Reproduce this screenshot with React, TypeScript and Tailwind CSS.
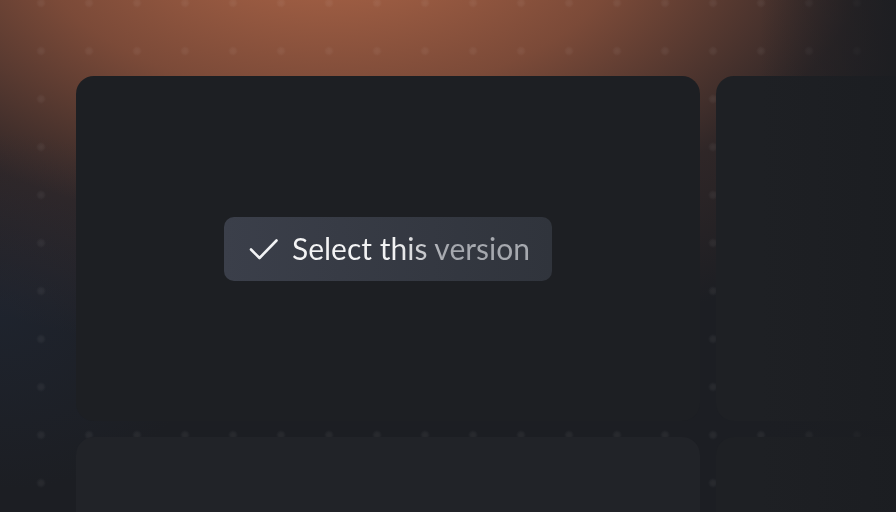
import React from 'react';

const CheckMark: React.FC = () => (
  <svg width="30" height="24" viewBox="0 0 30 24" fill="none" className="shrink-0">
    <path d="M2 12.5 10.5 21 27.5 3.5" stroke="#f2f3f5" strokeWidth="2.6" strokeLinecap="round" strokeLinejoin="round" />
  </svg>
);

const App: React.FC = () => {
  return (
    <div className="relative w-[896px] h-[512px] overflow-hidden bg-[#1c1e23] font-['Lato','Noto_Sans',sans-serif]">
      {/* backdrop: glow, blue tint, dot grid */}
      <div className="absolute inset-0 bg-[radial-gradient(ellipse_760px_440px_at_330px_-80px,rgba(182,106,74,1),rgba(140,82,60,0.85)_40%,rgba(70,48,44,0.45)_72%,rgba(28,30,35,0)_100%)]" />
      <div className="absolute inset-0 bg-[radial-gradient(ellipse_220px_180px_at_0px_310px,rgba(36,48,70,0.3),rgba(28,30,35,0)_100%)]" />
      <div className="absolute inset-0 bg-[radial-gradient(circle,rgba(255,255,255,0.05)_1px,rgba(255,255,255,0.035)_3px,rgba(255,255,255,0)_5px)] bg-[length:48px_48px] bg-[position:17px_-21px]" />

      {/* cards */}
      <div className="relative grid grid-cols-[624px_624px] grid-rows-[345px_345px] gap-4 pt-[76px] pl-[76px]">
        <div className="rounded-[18px] bg-[#1d1f23] flex items-center justify-center">
          <button className="h-16 w-[328px] rounded-[10px] bg-gradient-to-r from-[#3b3f4a] to-[#30343c] flex items-center gap-[13px] pl-[25px]">
            <CheckMark />
            <span className="text-[30px] leading-none pb-[2px] bg-[linear-gradient(90deg,#f4f4f5_0%,#f2f2f3_44%,#a6a9af_64%,#a6a9af_100%)] bg-clip-text text-transparent">
              Select this version
            </span>
          </button>
        </div>
        <div className="rounded-[18px] bg-[#1e2024]" />
        <div className="rounded-[18px] bg-[#212328]" />
        <div className="rounded-[18px] bg-[#1e2024]" />
      </div>

      {/* right edge fade */}
      <div className="absolute inset-0 bg-[linear-gradient(90deg,rgba(27,29,33,0)_0px,rgba(27,29,33,0)_760px,rgba(27,29,33,0.85)_896px)]" />
    </div>
  );
};

export default App;
